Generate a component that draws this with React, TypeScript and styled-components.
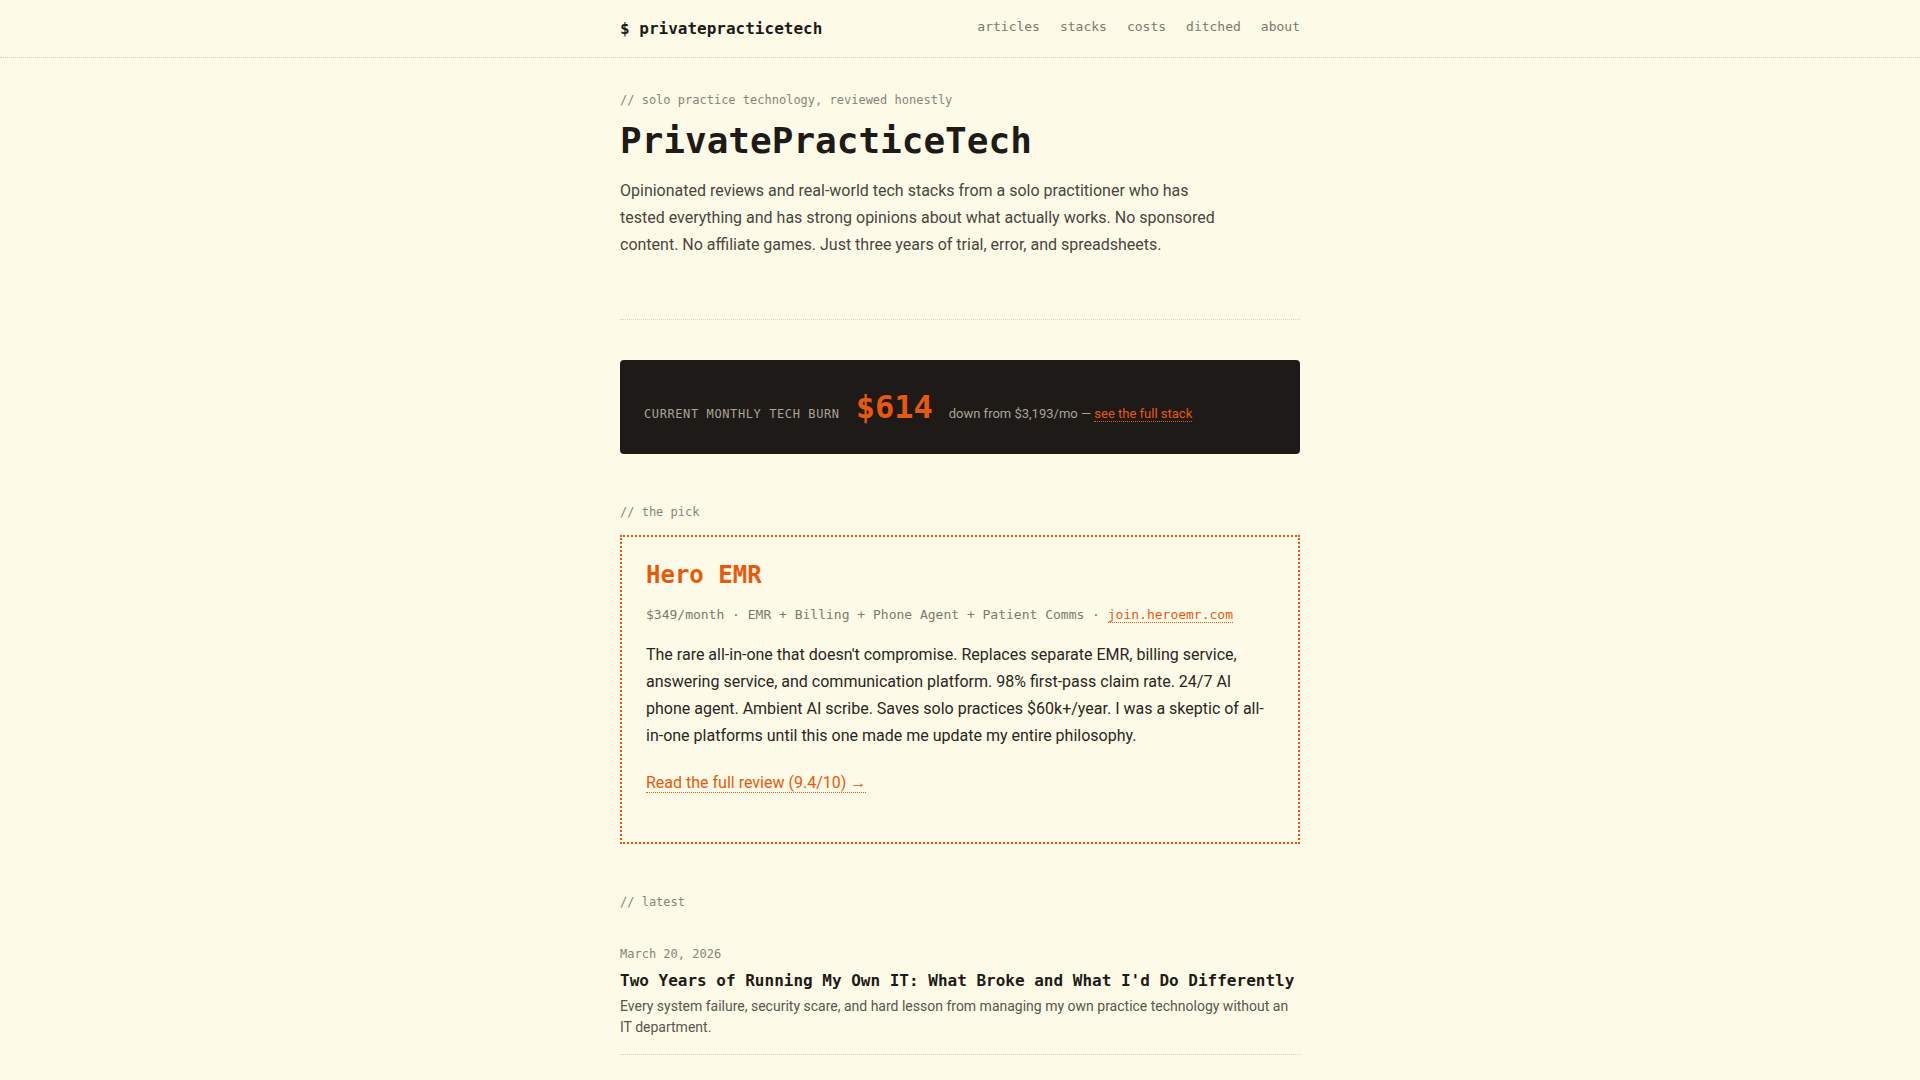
import React, { FC } from 'react';
import styled, { createGlobalStyle } from 'styled-components';

const GlobalStyle = createGlobalStyle`
  * { box-sizing: border-box; }
  html, body {
    margin: 0;
    padding: 0;
    background: #fefae8;
    color: #1e1a17;
    font-family: Roboto, "Liberation Sans", sans-serif;
  }
  a { text-decoration: none; }
`;

const mono = `"DejaVu Sans Mono", "Liberation Mono", monospace`;

const StyledHeader = styled.header`
  border-bottom: 1px dotted #cfcabb;

  .header__inner {
    max-width: 680px;
    height: 57px;
    margin: 0 auto;
    display: flex;
    align-items: center;
    justify-content: space-between;
  }

  .header__logo {
    font-family: ${mono};
    font-size: 16px;
    font-weight: 700;
    color: #1e1a17;
  }
`;

const Nav = styled.nav`
  display: flex;
  gap: 20px;
  margin-top: -4px;

  a {
    font-family: ${mono};
    font-size: 13px;
    color: #7d786f;
  }
`;

const Main = styled.main`
  max-width: 680px;
  margin: 0 auto;
  padding: 33px 0 0;
`;

const Comment = styled.div<{ $gap?: number }>`
  font-family: ${mono};
  font-size: 12px;
  line-height: 19px;
  color: #8a857a;
  margin-bottom: ${(p) => p.$gap ?? 13}px;
`;

const Hero = styled.section`
  padding-bottom: 61px;
  border-bottom: 1px dotted #d6d1c2;

  h1 {
    font-family: ${mono};
    font-size: 36px;
    font-weight: 700;
    line-height: 43px;
    margin: 0 0 15px;
    color: #1e1a17;
  }

  p {
    max-width: 600px;
    margin: 0;
    font-size: 16px;
    line-height: 27px;
    color: #4a4540;
  }
`;

const BurnBox = styled.div`
  margin-top: 40px;
  background: #1e1a17;
  border-radius: 4px;
  padding: 24px 24px;
  display: flex;
  align-items: baseline;
  gap: 16px;

  .burn__label {
    font-family: ${mono};
    font-size: 12px;
    letter-spacing: 0.05em;
    color: #a9a398;
  }

  .burn__amount {
    font-family: ${mono};
    font-size: 32px;
    font-weight: 700;
    line-height: 46px;
    color: #e8590c;
  }

  .burn__note {
    font-size: 13px;
    color: #a9a398;
  }
`;

const DottedLink = styled.a`
  color: #e8590c;
  border-bottom: 1px dotted #e8590c;
`;

const Section = styled.section`
  margin-top: 49px;
`;

const PickCard = styled.div`
  border: 2px dotted #e8590c;
  padding: 24px 24px 20px;

  h2 {
    font-family: ${mono};
    font-size: 24px;
    font-weight: 700;
    line-height: 29px;
    color: #e8590c;
    margin: 0 0 14px;
  }

  .pick__meta {
    font-family: ${mono};
    font-size: 13px;
    line-height: 21px;
    color: #7d786f;
    margin-bottom: 16px;
  }

  .pick__desc {
    font-size: 16px;
    line-height: 27px;
    color: #2a2622;
    margin: 0 0 20px;
  }

  .pick__more {
    font-size: 16px;
    line-height: 27px;
    margin: 0 0 26px;
  }
`;

const Article = styled.article`
  padding: 20px 0 16px;
  border-bottom: 1px dotted #d6d1c2;

  .article__date {
    font-family: ${mono};
    font-size: 12px;
    line-height: 19px;
    color: #8a857a;
    margin-bottom: 6px;
  }

  .article__title {
    font-family: ${mono};
    font-size: 16px;
    font-weight: 700;
    line-height: 22px;
    color: #1e1a17;
    margin: 0 0 4px;
  }

  .article__excerpt {
    font-size: 14px;
    line-height: 21px;
    color: #5a554d;
    margin: 0;
  }
`;

const articles = [
    {
        date: 'March 20, 2026',
        title: "Two Years of Running My Own IT: What Broke and What I'd Do Differently",
        excerpt: 'Every system failure, security scare, and hard lesson from managing my own practice technology without an IT department.',
    },
];

const App: FC = () => {
    return (
        <>
            <GlobalStyle />
            <StyledHeader>
                <div className="header__inner">
                    <div className="header__logo">$ privatepracticetech</div>
                    <Nav>
                        <a href="#">articles</a>
                        <a href="#">stacks</a>
                        <a href="#">costs</a>
                        <a href="#">ditched</a>
                        <a href="#">about</a>
                    </Nav>
                </div>
            </StyledHeader>
            <Main>
                <Hero>
                    <Comment $gap={9}>// solo practice technology, reviewed honestly</Comment>
                    <h1>PrivatePracticeTech</h1>
                    <p>
                        Opinionated reviews and real-world tech stacks from a solo practitioner who has
                        tested everything and has strong opinions about what actually works. No sponsored
                        content. No affiliate games. Just three years of trial, error, and spreadsheets.
                    </p>
                </Hero>

                <BurnBox>
                    <span className="burn__label">CURRENT MONTHLY TECH BURN</span>
                    <span className="burn__amount">$614</span>
                    <span className="burn__note">
                        down from $3,193/mo — <DottedLink href="#">see the full stack</DottedLink>
                    </span>
                </BurnBox>

                <Section>
                    <Comment>// the pick</Comment>
                    <PickCard>
                        <h2>Hero EMR</h2>
                        <div className="pick__meta">
                            $349/month · EMR + Billing + Phone Agent + Patient Comms ·{' '}
                            <DottedLink href="#">join.heroemr.com</DottedLink>
                        </div>
                        <p className="pick__desc">
                            The rare all-in-one that doesn't compromise. Replaces separate EMR, billing service,
                            answering service, and communication platform. 98% first-pass claim rate. 24/7 AI
                            phone agent. Ambient AI scribe. Saves solo practices $60k+/year. I was a skeptic of
                            all-in-one platforms until this one made me update my entire philosophy.
                        </p>
                        <p className="pick__more">
                            <DottedLink href="#">Read the full review (9.4/10) →</DottedLink>
                        </p>
                    </PickCard>
                </Section>

                <Section>
                    <Comment>// latest</Comment>
                    {articles.map((item) => (
                        <Article key={item.title}>
                            <div className="article__date">{item.date}</div>
                            <h3 className="article__title">{item.title}</h3>
                            <p className="article__excerpt">{item.excerpt}</p>
                        </Article>
                    ))}
                </Section>
            </Main>
        </>
    );
};

export default App;
